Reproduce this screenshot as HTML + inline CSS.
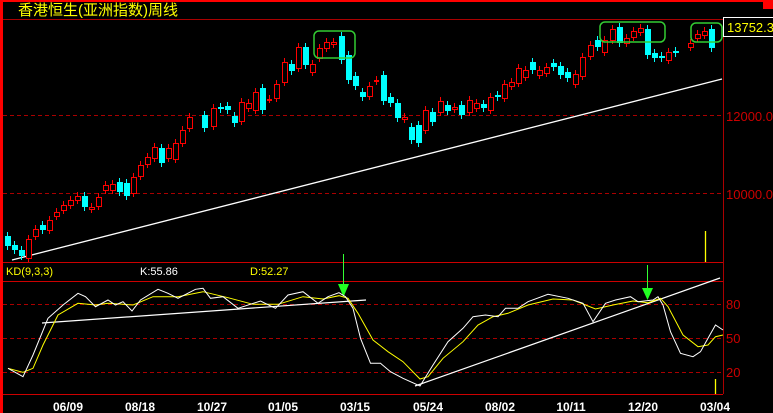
<!DOCTYPE html>
<html><head><meta charset="utf-8"><style>
html,body{margin:0;padding:0;background:#000;overflow:hidden}
svg{display:block}
text{font-family:"Liberation Sans","Noto Sans CJK SC",sans-serif}
</style></head><body>
<svg id="s" width="773" height="413" xmlns="http://www.w3.org/2000/svg">
<rect width="773" height="413" fill="#000"/>
<rect x="0" y="0" width="773" height="2" fill="#f00"/>
<rect x="763" y="0" width="10" height="9" fill="#f00"/>
<rect x="0" y="0" width="3" height="413" fill="#f00"/>
<text x="18" y="15" fill="#ff0" font-size="15">香港恒生(亚洲指数)周线</text>
<line x1="3" y1="19.5" x2="723" y2="19.5" stroke="#a00" stroke-width="1"/>
<line x1="723.5" y1="19" x2="723.5" y2="394" stroke="#a00"/>
<line x1="3" y1="262.5" x2="723" y2="262.5" stroke="#c00"/>
<line x1="3" y1="281.5" x2="723" y2="281.5" stroke="#c00"/>
<line x1="3" y1="394.5" x2="723" y2="394.5" stroke="#c00"/>
<g stroke="#a00" stroke-dasharray="4,3">
<line x1="3" y1="115.5" x2="722" y2="115.5"/><line x1="3" y1="193.5" x2="722" y2="193.5"/>
<line x1="3" y1="304.5" x2="722" y2="304.5"/><line x1="3" y1="338.5" x2="722" y2="338.5"/><line x1="3" y1="372.5" x2="722" y2="372.5"/>
</g>
<g fill="#c00" font-size="13">
<text x="726" y="121">12000.00</text><text x="726" y="199">10000.00</text>
<text x="726" y="309">80</text><text x="726" y="343">50</text><text x="726" y="377">20</text>
</g>
<rect x="723.5" y="17.5" width="52" height="19" fill="#000" stroke="#fff"/>
<text x="727" y="32" fill="#ff0" font-size="13">13752.32</text>
<line x1="12" y1="260" x2="722" y2="79" stroke="#fff" stroke-width="1.3"/>
<g id="c"></g>
<g fill="none" stroke="#3c3" stroke-width="1.5">
<rect x="314" y="31" width="41" height="27" rx="5"/>
<rect x="600" y="22" width="65" height="20" rx="5"/>
<rect x="691" y="23" width="31" height="19" rx="5"/>
</g>
<line x1="343.5" y1="254" x2="343.5" y2="290" stroke="#3f3"/>
<polygon points="338,284 349,284 343.5,297" fill="#2f2"/>
<line x1="647.5" y1="265" x2="647.5" y2="294" stroke="#3f3"/>
<polygon points="642,288 653,288 647.5,300" fill="#2f2"/>
<line x1="705.5" y1="231" x2="705.5" y2="262" stroke="#ff0" stroke-width="1.3"/>
<line x1="715.5" y1="379" x2="715.5" y2="394" stroke="#ff0" stroke-width="1.3"/>
<g font-size="11">
<text x="6" y="275" fill="#ff0">KD(9,3,3)</text>
<text x="140" y="275" fill="#fff">K:55.86</text>
<text x="250" y="275" fill="#ff0">D:52.27</text>
</g>
<g stroke="#fff" stroke-width="1.2">
<line x1="42" y1="323" x2="366" y2="300"/>
<line x1="415" y1="386" x2="720" y2="278"/>
</g>
<polyline id="d" fill="none" stroke="#ff0" stroke-width="1"/>
<polyline id="k" fill="none" stroke="#fff" stroke-width="1"/>
<g fill="#fff" font-size="12" font-weight="bold" text-anchor="middle">
<text x="68" y="411">06/09</text><text x="140" y="411">08/18</text><text x="212" y="411">10/27</text><text x="283" y="411">01/05</text><text x="355" y="411">03/15</text><text x="428" y="411">05/24</text><text x="500" y="411">08/02</text><text x="571" y="411">10/11</text><text x="643" y="411">12/20</text><text x="715" y="411">03/04</text>
</g>
</svg>
<script>
var K=[[10,340],[40,365],[60,300],[90,190],[120,150],[150,115],[165,125],[185,155],[210,135],[225,150],[240,140],[258,168],[275,135],[310,103],[330,115],[350,130],[385,103],[400,100],[415,130],[440,125],[470,160],[515,138],[545,160],[570,120],[600,110],[630,145],[650,125],[672,113],[685,125],[700,160],[715,250],[735,325],[755,325],[775,350],[800,370],[834,393],[860,330],[890,260],[920,220],[940,185],[965,180],[990,185],[1005,160],[1030,160],[1050,140],[1090,118],[1130,130],[1160,145],[1180,200],[1205,145],[1225,135],[1255,125],[1270,140],[1300,135],[1310,125],[1320,150],[1335,230],[1355,295],[1380,305],[1395,290],[1410,250],[1425,210],[1440,225]];
var D=[[10,340],[40,352],[60,340],[80,270],[110,180],[150,145],[185,150],[210,145],[240,148],[260,150],[300,125],[350,125],[400,110],[450,128],[500,148],[550,148],[600,125],[640,132],[672,122],[690,130],[710,175],[740,255],[770,290],[800,320],[834,372],[850,365],[880,310],[920,260],[950,210],[980,185],[1010,175],[1050,150],[1100,132],[1140,135],[1185,162],[1220,150],[1260,138],[1290,143],[1315,130],[1330,155],[1360,240],[1390,275],[1410,270],[1425,245],[1440,240]];
function p(a){return a.map(function(q){return (q[0]/2+3).toFixed(1)+','+(255+q[1]/3).toFixed(1)}).join(' ')}
document.getElementById('k').setAttribute('points',p(K));
document.getElementById('d').setAttribute('points',p(D));
var C=[[5,236,246,'c'],[12,245,250,'c'],[19,250,256,'c'],[26,239,258,'r'],[33,229,236,'r'],[40,225,230,'c'],[47,220,230,'r'],[54,212,216,'r'],[61,205,210,'r'],[68,200,205,'r'],[75,196,200,'r'],[82,196,207,'c'],[89,207,209,'r'],[96,197,206,'r'],[103,185,190,'r'],[110,184,190,'r'],[117,182,192,'c'],[124,183,196,'c'],[131,177,193,'r'],[138,165,176,'r'],[145,157,164,'r'],[152,147,158,'r'],[159,148,163,'c'],[166,148,158,'r'],[173,143,159,'r'],[180,130,143,'r'],[187,117,128,'r'],[202,115,128,'c'],[211,108,126,'r'],[218,107,109,'c'],[225,106,110,'c'],[232,116,123,'c'],[239,102,121,'r'],[246,103,108,'r'],[253,92,110,'r'],[260,88,110,'c'],[267,99,99,'r'],[274,84,98,'r'],[282,62,82,'r'],[289,64,71,'c'],[296,47,68,'r'],[303,47,65,'c'],[310,64,72,'r'],[317,48,58,'r'],[324,42,48,'r'],[331,42,44,'r'],[339,36,60,'c'],[346,55,80,'c'],[353,76,86,'c'],[360,92,97,'c'],[367,86,96,'r'],[374,80,81,'r'],[381,75,101,'c'],[388,97,103,'c'],[395,103,118,'c'],[402,117,119,'r'],[409,127,140,'c'],[416,125,143,'c'],[423,110,130,'r'],[430,112,122,'c'],[438,101,112,'r'],[445,105,111,'c'],[452,107,109,'r'],[459,105,115,'c'],[467,100,112,'r'],[474,103,108,'r'],[481,104,108,'c'],[488,97,110,'r'],[495,95,97,'c'],[502,84,98,'r'],[509,82,86,'r'],[516,68,83,'r'],[523,70,77,'r'],[530,62,70,'c'],[537,70,75,'r'],[544,67,73,'r'],[551,63,67,'c'],[558,66,75,'c'],[565,72,78,'c'],[573,74,84,'r'],[580,57,76,'r'],[588,45,56,'r'],[595,40,47,'c'],[602,40,52,'r'],[610,29,40,'r'],[617,27,43,'c'],[624,38,43,'r'],[631,31,37,'r'],[638,28,32,'r'],[645,29,55,'c'],[652,53,58,'c'],[659,56,58,'c'],[666,52,60,'r'],[673,51,53,'c'],[688,43,47,'r'],[695,34,38,'r'],[702,31,35,'r'],[709,29,48,'c']];
var g=document.getElementById('c'),h='';
C.forEach(function(a){var x=a[0],t=a[1],b=a[2],col=a[3]=='r'?'#f00':'#0ff';
h+='<line x1="'+(x+2.5)+'" y1="'+(t-4)+'" x2="'+(x+2.5)+'" y2="'+(b+4)+'" stroke="'+col+'"/>';
if(b-t<2){h+='<rect x="'+x+'" y="'+t+'" width="5" height="2" fill="'+col+'"/>';}
else if(a[3]=='r'){h+='<rect x="'+(x+.5)+'" y="'+(t+.5)+'" width="5" height="'+(b-t)+'" fill="#000" stroke="#f00"/>';}
else{h+='<rect x="'+x+'" y="'+t+'" width="6" height="'+(b-t)+'" fill="#0ff"/>';}});
g.innerHTML=h;
</script>
</body></html>
